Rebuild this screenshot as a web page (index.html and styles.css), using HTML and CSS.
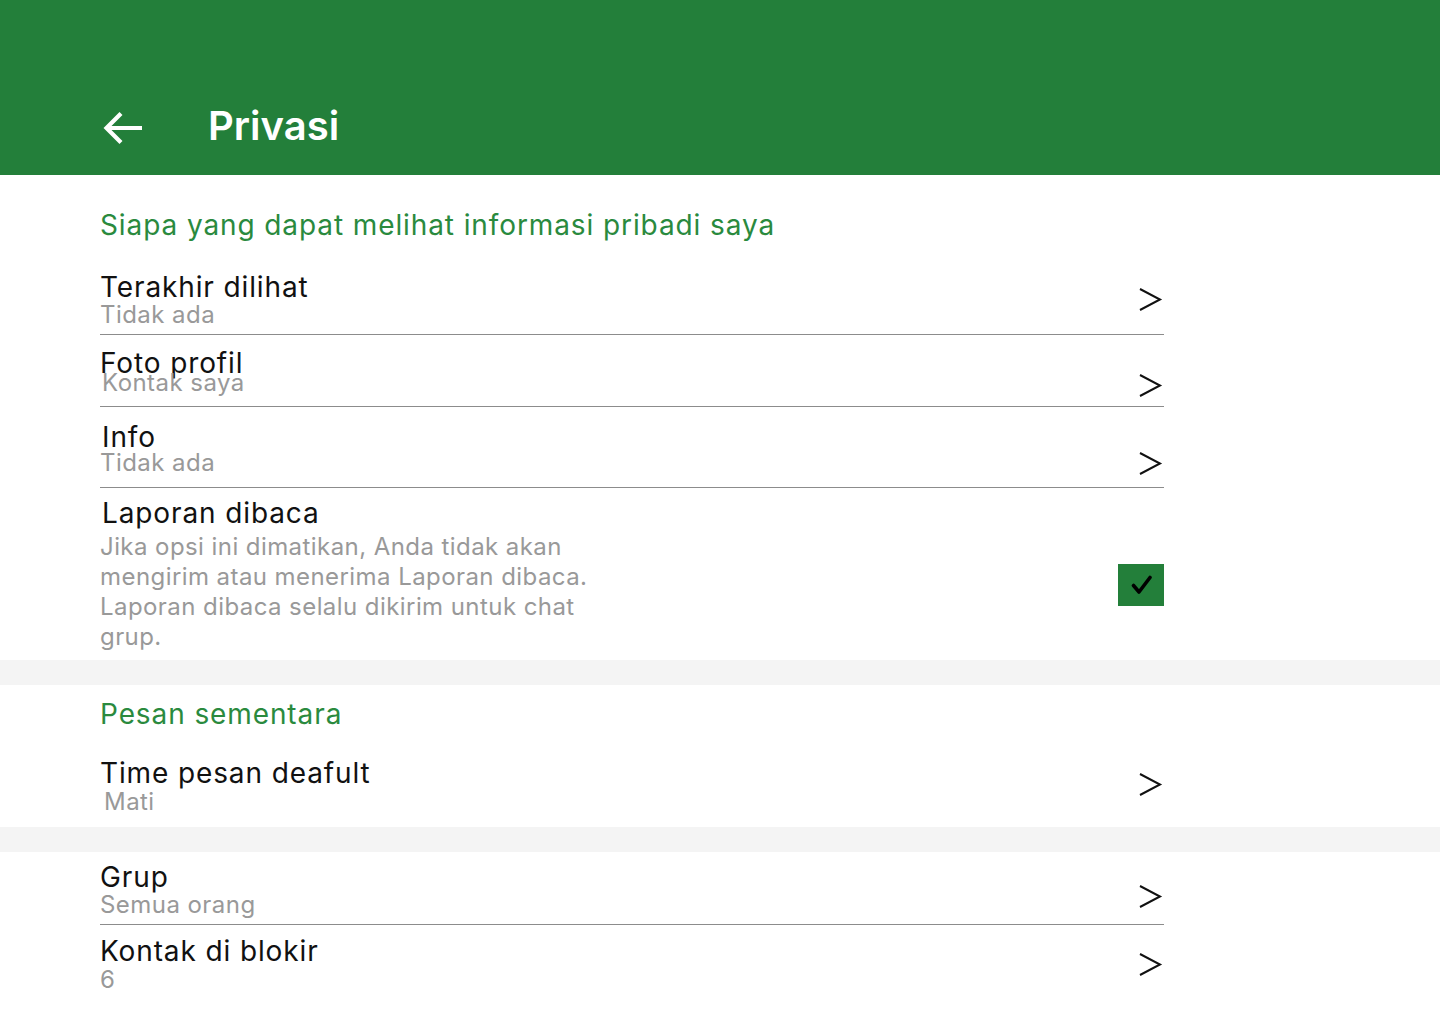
FILE: index.html
```html
<!DOCTYPE html>
<html lang="id">
<head>
<meta charset="utf-8">
<title>Privasi</title>
<link rel="stylesheet" href="styles.css">
</head>
<body>
<header class="appbar">
  <svg class="back" width="41" height="36" viewBox="0 0 41 36" aria-hidden="true">
    <path d="M39 18H4M18 3.5L3.5 18L18 32.5" fill="none" stroke="#fff" stroke-width="4.2" stroke-linecap="butt" stroke-linejoin="miter"/>
  </svg>
  <h1 class="appbar-title">Privasi</h1>
</header>

<main>
  <section class="section section-first">
    <h2 class="section-heading">Siapa yang dapat melihat informasi pribadi saya</h2>
    <div class="list">
      <div class="row row-1 divided">
        <div class="text">
          <div class="title">Terakhir dilihat</div>
          <div class="sub">Tidak ada</div>
        </div>
        <svg class="chev" width="25" height="24" viewBox="0 0 25 24" aria-hidden="true"><polyline points="1,1 21,11.5 1,22" fill="none" stroke="#111" stroke-width="2"/></svg>
      </div>
      <div class="row row-2 divided">
        <div class="text">
          <div class="title">Foto profil</div>
          <div class="sub sub-tight indent">Kontak saya</div>
        </div>
        <svg class="chev" width="25" height="24" viewBox="0 0 25 24" aria-hidden="true"><polyline points="1,1 21,11.5 1,22" fill="none" stroke="#111" stroke-width="2"/></svg>
      </div>
      <div class="row row-3 divided">
        <div class="text">
          <div class="title indent">Info</div>
          <div class="sub">Tidak ada</div>
        </div>
        <svg class="chev" width="25" height="24" viewBox="0 0 25 24" aria-hidden="true"><polyline points="1,1 21,11.5 1,22" fill="none" stroke="#111" stroke-width="2"/></svg>
      </div>
      <div class="row row-4">
        <div class="text">
          <div class="title indent">Laporan dibaca</div>
          <p class="desc">Jika opsi ini dimatikan, Anda tidak akan mengirim atau menerima Laporan dibaca. Laporan dibaca selalu dikirim untuk chat grup.</p>
        </div>
        <div class="checkbox" role="checkbox" aria-checked="true">
          <svg width="22" height="20" viewBox="0 0 22 20" aria-hidden="true"><path d="M2.5 10.5L8 17L19 2.5" fill="none" stroke="#000" stroke-width="3.6" stroke-linecap="round" stroke-linejoin="round"/></svg>
        </div>
      </div>
    </div>
  </section>

  <div class="gap"></div>

  <section class="section section-second">
    <h2 class="section-heading">Pesan sementara</h2>
    <div class="list">
      <div class="row row-5">
        <div class="text">
          <div class="title">Time pesan deafult</div>
          <div class="sub sub-loose indent-2">Mati</div>
        </div>
        <svg class="chev" width="25" height="24" viewBox="0 0 25 24" aria-hidden="true"><polyline points="1,1 21,11.5 1,22" fill="none" stroke="#111" stroke-width="2"/></svg>
      </div>
    </div>
  </section>

  <div class="gap"></div>

  <section class="section section-third">
    <div class="list">
      <div class="row row-6 divided">
        <div class="text">
          <div class="title">Grup</div>
          <div class="sub">Semua orang</div>
        </div>
        <svg class="chev" width="25" height="24" viewBox="0 0 25 24" aria-hidden="true"><polyline points="1,1 21,11.5 1,22" fill="none" stroke="#111" stroke-width="2"/></svg>
      </div>
      <div class="row row-7">
        <div class="text">
          <div class="title">Kontak di blokir</div>
          <div class="sub sub-loose">6</div>
        </div>
        <svg class="chev" width="25" height="24" viewBox="0 0 25 24" aria-hidden="true"><polyline points="1,1 21,11.5 1,22" fill="none" stroke="#111" stroke-width="2"/></svg>
      </div>
    </div>
  </section>
</main>
</body>
</html>
```

FILE: styles.css
```css
* {
  box-sizing: border-box;
}

html, body {
  margin: 0;
  padding: 0;
  background: #ffffff;
}

body {
  font-family: Inter, "Noto Sans", "Liberation Sans", sans-serif;
  color: #111111;
  width: 1440px;
  min-height: 1024px;
}

/* ---------- App bar ---------- */
.appbar {
  background: #237f3a;
  display: flex;
  align-items: center;
  padding: 102px 0 25px 103px;
}

.back {
  display: block;
  flex: none;
  margin-top: 4px;
}

.appbar-title {
  margin: 0 0 0 64px;
  font-size: 40px;
  line-height: 48px;
  font-weight: 600;
  color: #ffffff;
}

/* ---------- Sections ---------- */
.section {
  background: #ffffff;
  padding-left: 100px;
}

.section-first {
  padding-top: 33px;
}

.section-second {
  padding-top: 12px;
}

.section-third {
  padding-top: 10px;
}

.section-heading {
  margin: 0;
  font-size: 28px;
  line-height: 34px;
  font-weight: 400;
  letter-spacing: 0.9px;
  color: #2a8a3e;
}

.section-first .section-heading {
  margin-bottom: 30px;
}

.section-second .section-heading {
  margin-bottom: 27px;
}

.gap {
  height: 25px;
  background: #f4f4f4;
}

/* ---------- List rows ---------- */
.list {
  width: 1064px;
}

.row {
  display: flex;
  align-items: flex-start;
  justify-content: space-between;
}

.row.divided {
  border-bottom: 1px solid #8c8c8c;
}

.text {
  flex: 1;
  min-width: 0;
}

.title {
  font-size: 28px;
  line-height: 30px;
  letter-spacing: 0.88px;
  color: #111111;
}

.sub {
  font-size: 24px;
  line-height: 26px;
  letter-spacing: 0.45px;
  color: #999999;
}

.indent {
  margin-left: 2px;
}

.indent-2 {
  margin-left: 4px;
}

.sub-loose {
  margin-top: 1px;
}

.desc {
  margin: 4px 0 0 0;
  max-width: 520px;
  font-size: 24px;
  line-height: 30px;
  letter-spacing: 0.43px;
  color: #999999;
}

.chev {
  display: block;
  flex: none;
}

/* per-row vertical rhythm */
.row-1 { padding: 0 0 6px 0; }
.row-1 .chev { margin-top: 16px; }

.row-2 { padding: 13px 0 8px 0; }
.row-2 .sub-tight { margin-top: -8px; }
.row-2 .chev { margin-top: 26px; }

.row-3 { padding: 15px 0 11px 0; }
.row-3 .sub { margin-top: -2px; }
.row-3 .chev { margin-top: 30px; }

.row-4 { padding: 10px 0 8px 0; }

.checkbox {
  flex: none;
  width: 46px;
  height: 42px;
  margin-top: 66px;
  background: #237f3a;
  display: flex;
  align-items: center;
  justify-content: center;
}

.checkbox svg {
  display: block;
  margin-left: 2px;
}

.row-5 { padding: 0 0 12px 0; }
.row-5 .chev { margin-top: 15px; }

.row-6 { padding: 0 0 6px 0; }
.row-6 .chev { margin-top: 23px; }

.row-7 { padding: 11px 0 20px 0; }
.row-7 .chev { margin-top: 17px; }
```
